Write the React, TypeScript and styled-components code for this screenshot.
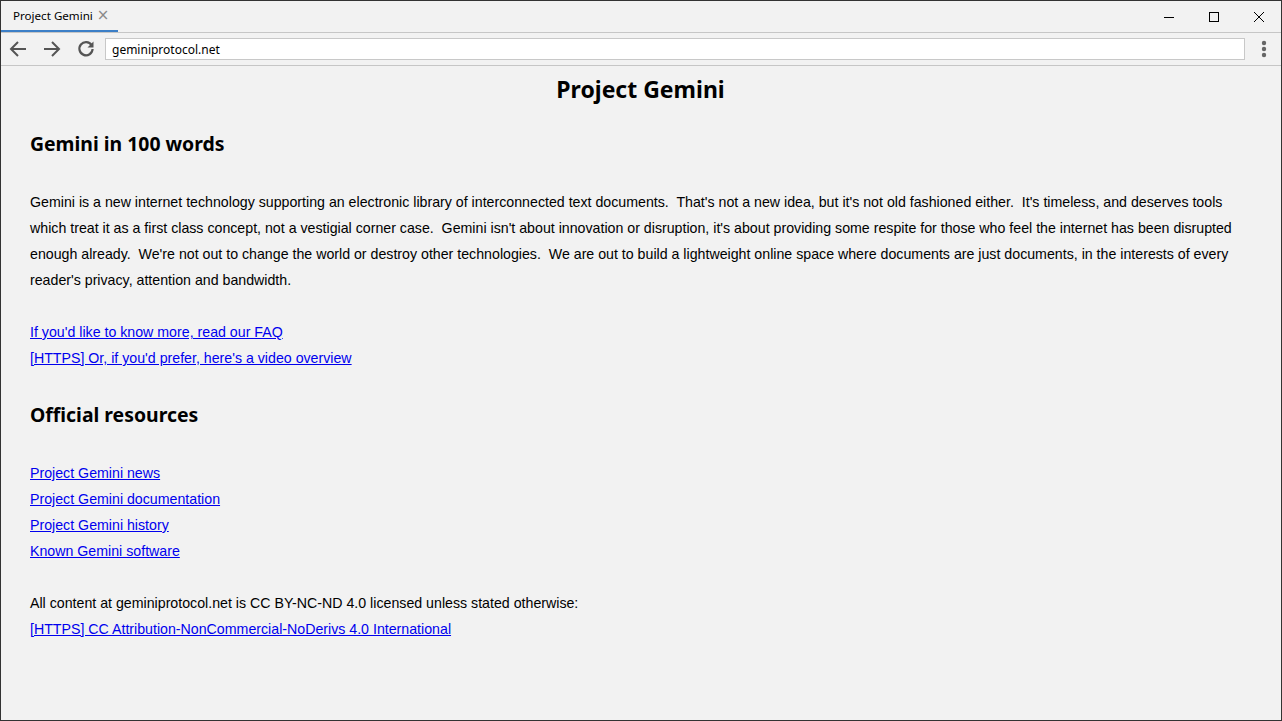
import React from "react";
import styled, { createGlobalStyle } from "styled-components";

const Global = createGlobalStyle`
  html, body { margin: 0; padding: 0; }
  body { background: #f2f2f2; }
  * { box-sizing: border-box; }
`;

const Window = styled.div`
  width: 1282px;
  height: 721px;
  border: 1px solid #333333;
  background: #f2f2f2;
  display: flex;
  flex-direction: column;
  overflow: hidden;
`;

const TabBar = styled.div`
  height: 32px;
  flex: none;
  display: flex;
  align-items: stretch;
  border-bottom: 1px solid #c6c6c6;
  background: #f2f2f2;
`;

const Tab = styled.div`
  width: 117px;
  display: flex;
  align-items: center;
  padding-left: 12px;
  gap: 4px;
  border-bottom: 2px solid #3c7fc7;
  font-family: "Noto Sans", "Open Sans", sans-serif;
  font-size: 11.6px;
  color: #000;
`;

const TabClose = styled.span`
  color: #8a8a8a;
  font-size: 15px;
  line-height: 1;
  font-family: "DejaVu Sans", sans-serif;
`;

const Spacer = styled.div`
  flex: 1;
`;

const WinButton = styled.div`
  width: 45px;
  display: flex;
  align-items: center;
  justify-content: center;
`;

const Toolbar = styled.div`
  height: 33px;
  flex: none;
  display: flex;
  align-items: center;
  padding-left: 0;
  border-bottom: 1px solid #c6c6c6;
  background: #f2f2f2;
`;

const NavButton = styled.div`
  width: 34px;
  height: 28px;
  display: flex;
  align-items: center;
  justify-content: center;
`;

const Address = styled.div`
  margin-left: 2px;
  width: 1140px;
  height: 22px;
  background: #fff;
  border: 1px solid #c8c8c8;
  display: flex;
  align-items: center;
  padding-left: 6px;
  font-family: "Noto Sans", "Open Sans", sans-serif;
  font-size: 12px;
  color: #000;
`;

const MenuButton = styled.div`
  flex: 1;
  display: flex;
  justify-content: center;
  padding-left: 1px;
`;

const Page = styled.div`
  flex: 1;
  padding: 0 30px 0 29px;
  font-family: "Liberation Sans", Arial, sans-serif;
  font-size: 14.2px;
  color: #000;
`;

const Title = styled.h1`
  margin: 0;
  height: 46px;
  line-height: 46px;
  text-align: center;
  font-family: "Noto Sans", "Open Sans", sans-serif;
  font-weight: 700;
  font-size: 23px;
`;

const Heading = styled.h2<{ $top: number }>`
  margin: ${(p) => p.$top}px 0 29px;
  height: 32px;
  line-height: 32px;
  font-family: "Noto Sans", "Open Sans", sans-serif;
  font-weight: 700;
  font-size: 19.4px;
`;

const Text = styled.p<{ $gap?: boolean }>`
  margin: 0 0 ${(p) => (p.$gap ? 26 : 0)}px;
  line-height: 26px;
  white-space: pre-wrap;
`;

const LinkLine = styled.a<{ $gap?: boolean }>`
  display: table;
  margin-bottom: ${(p) => (p.$gap ? 26 : 0)}px;
  line-height: 26px;
  color: #0000ee;
  text-decoration: underline;
  cursor: pointer;
`;

const iconStroke = "#555";

const BackIcon = () => (
  <svg width="20" height="20" viewBox="0 0 20 20" fill="none" stroke={iconStroke} strokeWidth="2" strokeLinecap="butt" strokeLinejoin="miter">
    <path d="M18 10H3" />
    <path d="M10 3L3 10L10 17" />
  </svg>
);

const ForwardIcon = () => (
  <svg width="20" height="20" viewBox="0 0 20 20" fill="none" stroke={iconStroke} strokeWidth="2" strokeLinecap="butt" strokeLinejoin="miter">
    <path d="M2 10H17" />
    <path d="M10 3L17 10L10 17" />
  </svg>
);

const ReloadIcon = () => (
  <svg width="20" height="20" viewBox="0 0 20 20" fill="none">
    <path d="M15.6 6.2A6.6 6.6 0 1 0 16.6 10" stroke={iconStroke} strokeWidth="2.2" fill="none" />
    <path d="M17.5 2.5V8.5H11.5Z" fill={iconStroke} />
  </svg>
);

const Dots = () => (
  <svg width="6" height="18" viewBox="0 0 6 18">
    <circle cx="3" cy="3" r="2.2" fill="#666" />
    <circle cx="3" cy="9" r="2.2" fill="#666" />
    <circle cx="3" cy="15" r="2.2" fill="#666" />
  </svg>
);

const MinIcon = () => (
  <svg width="12" height="12" viewBox="0 0 12 12">
    <path d="M1 6.5H11" stroke="#000" strokeWidth="1" />
  </svg>
);

const MaxIcon = () => (
  <svg width="12" height="12" viewBox="0 0 12 12">
    <rect x="1.5" y="1.5" width="9" height="9" stroke="#000" strokeWidth="1" fill="none" />
  </svg>
);

const CloseIcon = () => (
  <svg width="12" height="12" viewBox="0 0 12 12">
    <path d="M1 1L11 11M11 1L1 11" stroke="#000" strokeWidth="1" />
  </svg>
);

const intro =
  "Gemini is a new internet technology supporting an electronic library of interconnected text documents.  That's not a new idea, but it's not old fashioned either.  It's timeless, and deserves tools which treat it as a first class concept, not a vestigial corner case.  Gemini isn't about innovation or disruption, it's about providing some respite for those who feel the internet has been disrupted enough already.  We're not out to change the world or destroy other technologies.  We are out to build a lightweight online space where documents are just documents, in the interests of every reader's privacy, attention and bandwidth.";

export default function App() {
  return (
    <>
      <Global />
      <Window>
        <TabBar>
          <Tab>
            <span>Project Gemini</span>
            <TabClose>×</TabClose>
          </Tab>
          <Spacer />
          <WinButton><MinIcon /></WinButton>
          <WinButton><MaxIcon /></WinButton>
          <WinButton><CloseIcon /></WinButton>
        </TabBar>
        <Toolbar>
          <NavButton><BackIcon /></NavButton>
          <NavButton><ForwardIcon /></NavButton>
          <NavButton><ReloadIcon /></NavButton>
          <Address>geminiprotocol.net</Address>
          <MenuButton><Dots /></MenuButton>
        </Toolbar>
        <Page>
          <Title>Project Gemini</Title>
          <Heading $top={16}>Gemini in 100 words</Heading>
          <Text $gap>{intro}</Text>
          <LinkLine>If you'd like to know more, read our FAQ</LinkLine>
          <LinkLine>[HTTPS] Or, if you'd prefer, here's a video overview</LinkLine>
          <Heading $top={28}>Official resources</Heading>
          <LinkLine>Project Gemini news</LinkLine>
          <LinkLine>Project Gemini documentation</LinkLine>
          <LinkLine>Project Gemini history</LinkLine>
          <LinkLine $gap>Known Gemini software</LinkLine>
          <Text>All content at geminiprotocol.net is CC BY-NC-ND 4.0 licensed unless stated otherwise:</Text>
          <LinkLine>[HTTPS] CC Attribution-NonCommercial-NoDerivs 4.0 International</LinkLine>
        </Page>
      </Window>
    </>
  );
}
